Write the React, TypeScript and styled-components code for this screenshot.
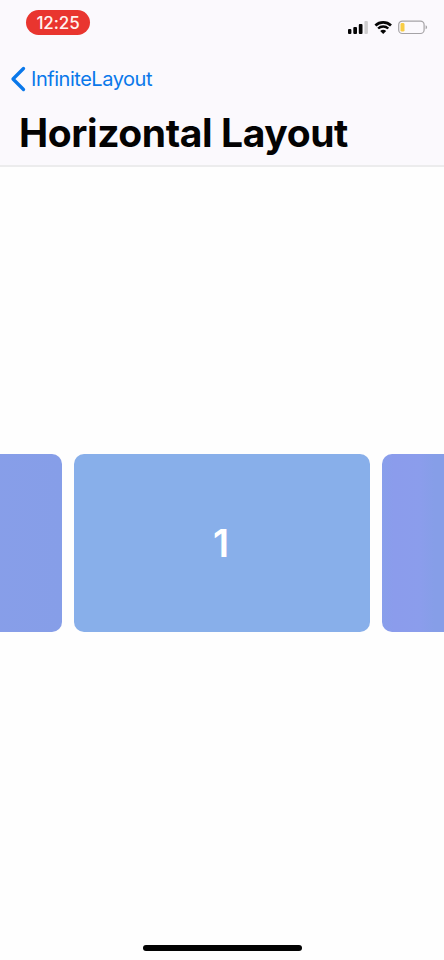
import React from 'react';
import styled, { createGlobalStyle } from 'styled-components';

const GlobalStyle = createGlobalStyle`
  * { box-sizing: border-box; }
  body { margin: 0; overflow: hidden; background: #fefefe; }
`;

const Screen = styled.div`
  width: 444px;
  height: 960px;
  display: flex;
  flex-direction: column;
  overflow: hidden;
  background: #fefefe;
  font-family: Inter, 'Liberation Sans', sans-serif;
`;

const Header = styled.header`
  height: 167px;
  flex: none;
  background: #fbf9fd;
  border-bottom: 2px solid #ececed;
`;

const StatusBar = styled.div`
  height: 46px;
  padding: 10px 15px 0 26px;
  display: flex;
  justify-content: space-between;
`;

const TimePill = styled.div`
  width: 64px;
  height: 25px;
  border-radius: 13px;
  background: #e9352f;
  color: #fff3ef;
  font-size: 17px;
  font-weight: 500;
  letter-spacing: -0.1px;
  line-height: 26px;
  text-align: center;
`;

const StatusIcons = styled.svg`
  width: 81px;
  height: 16px;
  margin-top: 9px;
`;

const BackButton = styled.button`
  height: 64px;
  padding: 1px 0 0 10px;
  border: 0;
  background: none;
  display: flex;
  align-items: center;
  gap: 5px;
  color: #0a78ea;
  font: 400 20px/24px Inter, 'Liberation Sans', sans-serif;
  letter-spacing: -0.47px;
`;

const Chevron = styled.svg`
  width: 16px;
  height: 26px;
`;

const Title = styled.h1`
  margin: 0;
  padding-left: 19px;
  color: #030303;
  font-size: 39px;
  font-weight: 700;
  line-height: 46px;
  letter-spacing: -0.4px;
  white-space: nowrap;
`;

const Carousel = styled.main`
  flex: 1;
  display: flex;
  justify-content: center;
  gap: 12px;
  padding-top: 287px;
`;

const Card = styled.div<{ $fill: string }>`
  flex: none;
  width: 296px;
  height: 177.5px;
  border-radius: 10px;
  background: ${(p) => p.$fill};
  display: flex;
  align-items: center;
  justify-content: center;
  padding-right: 2px;
  color: #fff;
  font-size: 38px;
  font-weight: 600;
  line-height: 46px;
`;

const HomeArea = styled.footer`
  height: 16px;
  display: flex;
  justify-content: center;
`;

const HomeIndicator = styled.div`
  width: 159px;
  height: 6px;
  margin-top: 1px;
  border-radius: 3px;
  background: #020202;
`;

const sideFill = 'linear-gradient(90deg, #8b9eeb, #869ee8)';
const rightFill = 'linear-gradient(90deg, #889feb 0, #8b9cec 12px, #8b9dec 38px, #869ee8 52px)';

export default function App() {
  return (
    <Screen>
      <GlobalStyle />
      <Header>
        <StatusBar>
          <TimePill>12:25</TimePill>
          <StatusIcons viewBox="0 0 81 16" fill="none">
            <rect x="0" y="10" width="3.4" height="5" rx="1" fill="#050505" />
            <rect x="5.3" y="8" width="3.7" height="7" rx="1" fill="#050505" />
            <rect x="10.8" y="5" width="3.7" height="10" rx="1" fill="#050505" />
            <rect x="16.4" y="2" width="3.5" height="13" rx="1" fill="#cecdcf" />
            <path d="M27.4 6.4a11.3 11.3 0 0 1 15.6 0" stroke="#050505" strokeWidth="2.7" />
            <path d="M30.1 9.5a7.4 7.4 0 0 1 10.2 0" stroke="#050505" strokeWidth="2.4" />
            <path d="M32.2 12.1a4.3 4.3 0 0 1 6 0l-3 2.9z" fill="#050505" />
            <rect x="50.7" y="2.1" width="25.4" height="12.4" rx="3.6" stroke="#a5a3a6" strokeWidth="1.2" />
            <rect x="52.5" y="4" width="4" height="8.6" rx="1.4" fill="#f8cd45" />
            <path d="M77.6 6.3c2 .7 2 3.3 0 4z" fill="#a5a3a6" />
          </StatusIcons>
        </StatusBar>
        <BackButton>
          <Chevron viewBox="0 0 16 26" fill="none">
            <path d="M13.5 2.5 3 13l10.5 10.5" stroke="#0a78ea" strokeWidth="3.3" strokeLinecap="round" strokeLinejoin="round" />
          </Chevron>
          InfiniteLayout
        </BackButton>
        <Title>Horizontal Layout</Title>
      </Header>
      <Carousel>
        <Card $fill={sideFill} />
        <Card $fill="#88afea">1</Card>
        <Card $fill={rightFill} />
      </Carousel>
      <HomeArea>
        <HomeIndicator />
      </HomeArea>
    </Screen>
  );
}
